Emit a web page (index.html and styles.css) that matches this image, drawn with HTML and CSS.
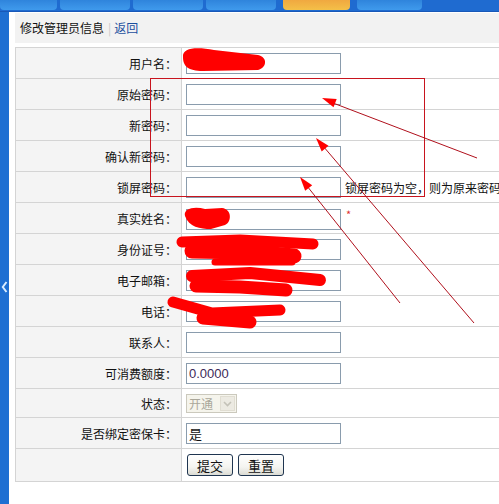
FILE: index.html
```html
<!DOCTYPE html>
<html lang="zh-CN">
<head>
<meta charset="utf-8">
<title>修改管理员信息</title>
<link rel="stylesheet" href="styles.css">
</head>
<body>
<div class="topbar">
  <span class="tab t1"></span>
  <span class="tab t2"></span>
  <span class="tab t3"></span>
  <span class="tab t4"></span>
  <span class="tab active"></span>
  <span class="tab t6"></span>
</div>
<div class="main">
  <div class="sidebar">
    <svg class="collapse" width="7" height="12" viewBox="0 0 7 12"><path d="M5.5 1 L1.8 6 L5.5 11" fill="none" stroke="#d8ecff" stroke-width="2"/></svg>
  </div>
  <div class="content">
    <div class="title">修改管理员信息<span class="sep">|</span><a class="back" href="#">返回</a></div>
    <table class="form">
      <tr><th>用户名：</th><td><input class="txt" type="text"></td></tr>
      <tr><th>原始密码：</th><td><input class="txt" type="password"></td></tr>
      <tr><th>新密码：</th><td><input class="txt" type="password"></td></tr>
      <tr><th>确认新密码：</th><td><input class="txt" type="password"></td></tr>
      <tr><th>锁屏密码：</th><td><input class="txt" type="password"><span class="note">锁屏密码为空，则为原来密码</span></td></tr>
      <tr><th>真实姓名：</th><td><input class="txt" type="text"><span class="req">*</span></td></tr>
      <tr><th>身份证号：</th><td><input class="txt" type="text"></td></tr>
      <tr><th>电子邮箱：</th><td><input class="txt" type="text"></td></tr>
      <tr><th>电话：</th><td><input class="txt" type="text"></td></tr>
      <tr><th>联系人：</th><td><input class="txt" type="text"></td></tr>
      <tr><th>可消费额度：</th><td><input class="txt num" type="text" value="0.0000"></td></tr>
      <tr class="short"><th>状态：</th><td><span class="sel"><span class="sel-text">开通</span><span class="sel-btn"><svg width="9" height="6" viewBox="0 0 9 6"><path d="M1 1 L4.5 4.5 L8 1" fill="none" stroke="#c4c2b8" stroke-width="1.6"/></svg></span></span></td></tr>
      <tr><th>是否绑定密保卡：</th><td><input class="txt" type="text" value="是"></td></tr>
      <tr class="tall"><th></th><td><button class="btn" type="button">提交</button><button class="btn" type="button">重置</button></td></tr>
    </table>
  </div>
</div>
<svg class="marks" width="499" height="504" viewBox="0 0 499 504">
  <g fill="#ff0000">
    <path d="M183,57 C182,47 198,47 214,50 L258,55 C268,57 267,68 258,70 L203,71 C188,71 183,66 183,57 Z"/>
    <path d="M185,216 C183,208 195,206 205,209 L222,208 C232,209 232,222 225,225 L211,229 C200,229 189,227 185,216 Z"/>
  </g>
  <g fill="none" stroke="#ff0000" stroke-linecap="round" stroke-linejoin="round">
    <path d="M182,242 L240,240 L313,244" stroke-width="11"/>
    <path d="M192,251 L250,252 L294,256" stroke-width="15"/>
    <path d="M215,262 L292,262" stroke-width="7"/>
    <path d="M192,276 L250,273 L320,280" stroke-width="12"/>
    <path d="M196,286 L240,287 L286,290" stroke-width="13"/>
    <path d="M173,302 L212,313 L280,310" stroke-width="11"/>
    <path d="M203,318 L250,322" stroke-width="13"/>
  </g>
  <rect x="150.5" y="78.5" width="274" height="118" fill="none" stroke="#c8141e" stroke-width="1"/>
  <g stroke="#b0101c" stroke-width="1">
    <line x1="477" y1="158" x2="333" y2="103"/>
    <line x1="474" y1="323" x2="323" y2="146"/>
    <line x1="400" y1="303" x2="307" y2="186"/>
  </g>
  <g fill="#ff0000">
    <polygon points="322,98 336.7,98.9 333.5,107.3"/>
    <polygon points="316,138 328.5,145.7 321.7,151.5"/>
    <polygon points="300,177 312.2,185.2 305.2,190.8"/>
  </g>
</svg>
</body>
</html>
```

FILE: styles.css
```css
html, body {
  margin: 0;
  padding: 0;
  background: #ffffff;
  overflow: hidden;
}

body {
  width: 499px;
  height: 504px;
  position: relative;
  font-family: "Noto Sans CJK SC", "Liberation Sans", sans-serif;
  font-size: 12px;
  color: #111111;
}

.topbar {
  height: 12px;
  background: #1f6bd0;
  border-bottom: 1px solid #1858b8;
  display: flex;
  align-items: flex-start;
  box-sizing: border-box;
}

.tab {
  height: 10px;
  background: linear-gradient(#2f84dc, #3f9aec);
  border-radius: 0 0 4px 4px;
  margin-right: 3px;
}

.t1 { width: 57px; }
.t2 { width: 70px; }
.t3 { width: 70px; }
.t4 { width: 70px; margin-right: 7px; }
.tab.active {
  width: 67px;
  margin-right: 7px;
  background: linear-gradient(#f0a840, #f4c048);
}
.t6 { width: 65px; }

.main {
  display: flex;
  height: 492px;
}

.sidebar {
  width: 9px;
  flex: none;
  background: #1e6fd2;
  position: relative;
}

.collapse {
  position: absolute;
  left: 1px;
  top: 269px;
}

.content {
  flex: none;
  width: 600px;
  margin-left: 6px;
  padding-top: 1px;
}

.title {
  height: 30px;
  line-height: 30px;
  background: #f2f2f2;
  padding-left: 5px;
  color: #111111;
  margin-bottom: 4px;
}

.sep {
  color: #c8c8c8;
  margin: 0 3px 0 4px;
}

.back {
  color: #1c4f9e;
  text-decoration: none;
}

.form {
  border-collapse: collapse;
  width: 600px;
}

.form th,
.form td {
  border: 1px solid #d4d4d4;
  height: 30px;
  padding: 0;
  vertical-align: middle;
  white-space: nowrap;
}

.form th {
  width: 161px;
  background: #f4f4f4;
  text-align: right;
  font-weight: normal;
  padding-right: 4px;
  color: #111111;
}

.form td {
  padding-left: 4px;
  background: #ffffff;
}

.form tr.short th,
.form tr.short td {
  height: 28px;
}

.form tr.tall th,
.form tr.tall td {
  height: 32px;
}

.txt {
  box-sizing: border-box;
  width: 155px;
  height: 21px;
  border: 1px solid #8a9cad;
  padding: 0 2px;
  margin: 0;
  font-family: "Liberation Sans", "Noto Sans CJK SC", sans-serif;
  font-size: 13px;
  color: #111111;
  background: #ffffff;
  vertical-align: middle;
  outline: none;
}

.num {
  color: #3c2a58;
}

.note {
  margin-left: 4px;
  color: #111111;
  vertical-align: middle;
}

.req {
  margin-left: 5px;
  color: #e03030;
  font-size: 11px;
  vertical-align: 4px;
}

.sel {
  display: inline-flex;
  align-items: center;
  box-sizing: border-box;
  width: 51px;
  height: 19px;
  border: 1px solid #cbc9bd;
  background: #f5f4ec;
  vertical-align: middle;
}

.sel-text {
  flex: 1;
  padding-left: 2px;
  color: #aaa79a;
  line-height: 17px;
}

.sel-btn {
  width: 15px;
  height: 15px;
  margin-right: 1px;
  background: #eceae2;
  border: 1px solid #e0ddd2;
  box-sizing: border-box;
  display: flex;
  align-items: center;
  justify-content: center;
}

.btn {
  box-sizing: border-box;
  width: 46px;
  height: 22px;
  margin: 0 5px 0 1px;
  padding: 0;
  border: 1px solid #1f3550;
  border-radius: 3px;
  background: linear-gradient(#ffffff, #f4f4f0 60%, #dcdcd4);
  font-family: "Noto Sans CJK SC", sans-serif;
  font-size: 13px;
  color: #111111;
  vertical-align: middle;
}

.btn + .btn {
  margin-left: 0;
}

.marks {
  position: absolute;
  left: 0;
  top: 0;
  pointer-events: none;
}
```
